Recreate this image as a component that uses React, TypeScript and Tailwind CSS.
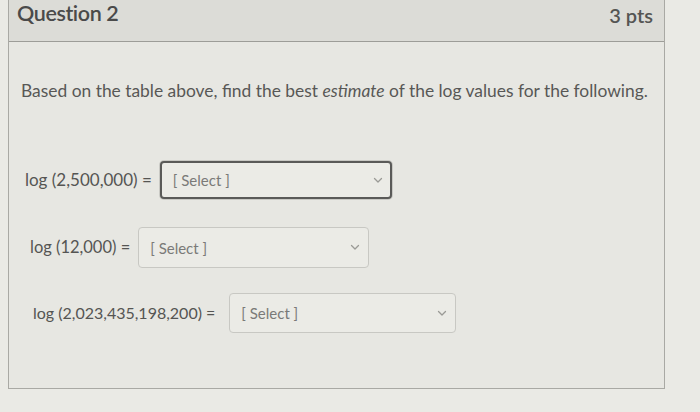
import React from "react";

const Chevron = () => (
  <svg width="10" height="7" viewBox="0 0 10 7" fill="none" className="shrink-0">
    <path d="M1.5 1.5 L5 5 L8.5 1.5" stroke="#9a9a96" strokeWidth="1.3" strokeLinecap="round" strokeLinejoin="round" />
  </svg>
);

function Select({ focused, className }: { focused?: boolean; className: string }) {
  return (
    <div
      className={
        "flex items-center justify-between rounded-[4px] bg-[#ebebe6] " +
        (focused
          ? "border-2 border-[#5a5a58] pl-[11px] pr-[7px] shadow-[0_0_0_1px_#c9c9c4]"
          : "border border-[#c8c8c3] pl-[11px] pr-[8px]") +
        " " +
        className
      }
    >
      <span className="text-[15px] leading-[18px] text-[#7a7a78]">[ Select ]</span>
      <Chevron />
    </div>
  );
}

export default function App() {
  return (
    <div
      className="w-[700px] h-[412px] overflow-hidden bg-[#eaeae5] pl-[8px] pr-[35px]"
      style={{ fontFamily: "Lato, 'Open Sans', sans-serif" }}
    >
      <div className="h-[390px] mt-[-1px] border border-t-0 border-[#a9a9a4] bg-[#e7e7e2] flex flex-col">
        <div className="h-[43px] shrink-0 bg-[#dcdcd7] border-b border-[#9d9d98] flex justify-between pl-[8px] pr-[11px]">
          <span className="text-[21.5px] leading-[26px] mt-[1px] font-semibold text-[#4a4a4a] tracking-[-0.4px]">Question 2</span>
          <span className="text-[20px] leading-[26px] mt-[3px] font-semibold text-[#555553]">3 pts</span>
        </div>
        <div className="flex flex-col pt-[37px]">
          <p className="pl-[12px] text-[17.4px] leading-[24px] text-[#585856]">
            Based on the table above, find the best <em>estimate</em> of the log values for the following.
          </p>
          <div className="flex items-center mt-[58px] pl-[16px] gap-[8px]">
            <span className="text-[17px] text-[#555553]">log (2,500,000) =</span>
            <Select focused className="w-[232px] h-[38px]" />
          </div>
          <div className="flex items-center mt-[28px] pl-[21px] gap-[8px]">
            <span className="text-[16.5px] text-[#555553]">log (12,000) =</span>
            <Select className="w-[231px] h-[41px]" />
          </div>
          <div className="flex items-center mt-[25px] pl-[24px] gap-[14px]">
            <span className="text-[16px] text-[#555553]">log (2,023,435,198,200) =</span>
            <Select className="w-[227px] h-[40px]" />
          </div>
        </div>
      </div>
    </div>
  );
}
